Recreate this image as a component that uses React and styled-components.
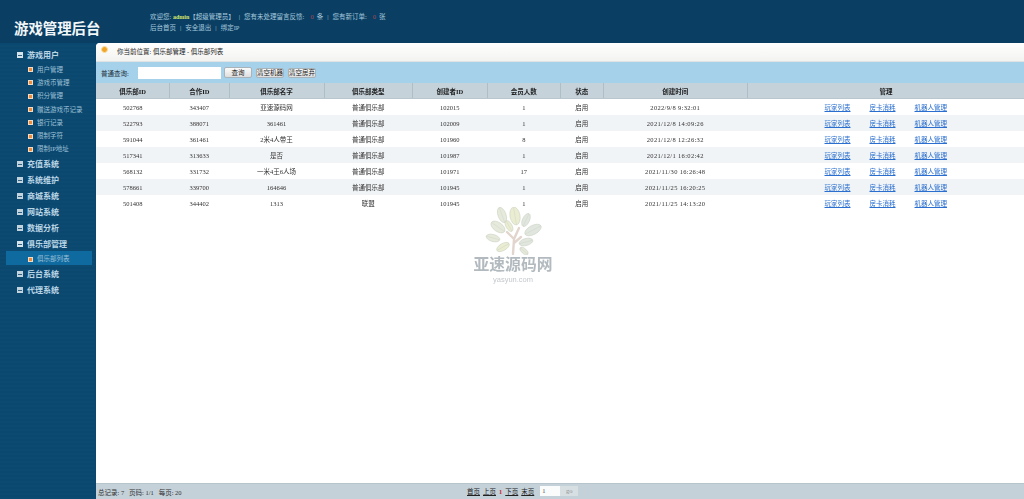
import React from 'react';
import styled, { createGlobalStyle } from 'styled-components';

const CJK = '"Liberation Serif", "Noto Sans CJK SC", serif';

const Global = createGlobalStyle`
    html, body {
        margin: 0;
        height: 499px;
        overflow: hidden;
        background: #0b466d;
        font-family: ${CJK};
        font-size: 6.5px;
    }
`;

const menu = [
    { name: '游戏用户', open: true, items: ['用户管理', '游戏币管理', '积分管理', '赠送游戏币记录', '银行记录', '限制字符', '限制IP地址'] },
    { name: '充值系统' },
    { name: '系统维护' },
    { name: '商城系统' },
    { name: '网站系统' },
    { name: '数据分析' },
    { name: '俱乐部管理', open: true, items: ['俱乐部列表'], active: '俱乐部列表' },
    { name: '后台系统' },
    { name: '代理系统' },
];

const columns = [
    { title: '俱乐部ID', width: 73.5 },
    { title: '合作ID', width: 59.5 },
    { title: '俱乐部名字', width: 95 },
    { title: '俱乐部类型', width: 88.5 },
    { title: '创建者ID', width: 74.5 },
    { title: '会员人数', width: 73.5 },
    { title: '状态', width: 42.5 },
    { title: '创建时间', width: 144.5 },
    { title: '管理', width: 276.5 },
];

const rows = [
    ['502768', '343407', '亚速源码网', '普通俱乐部', '102015', '1', '启用', '2022/9/8 9:32:01'],
    ['522793', '388071', '361461', '普通俱乐部', '102009', '1', '启用', '2021/12/8 14:09:26'],
    ['591044', '361461', '2米4人带王', '普通俱乐部', '101960', '8', '启用', '2021/12/8 12:26:32'],
    ['517341', '313633', '是否', '普通俱乐部', '101987', '1', '启用', '2021/12/1 16:02:42'],
    ['568132', '331732', '一米4王6人场', '普通俱乐部', '101971', '17', '启用', '2021/11/30 16:26:48'],
    ['578661', '339700', '164646', '普通俱乐部', '101945', '1', '启用', '2021/11/25 16:20:25'],
    ['501408', '344402', '1313', '联盟', '101945', '1', '启用', '2021/11/25 14:13:20'],
];

const leaves = [
    [49, 14, 4, 8, -20], [62, 15, 5, 9, -10], [73, 19, 3.5, 7, 25], [45, 26, 4.5, 8, -55],
    [56, 25, 3, 6, -30], [80, 29, 4.5, 9, 62], [40, 37, 3.5, 7, -75], [50, 46, 3.5, 7, 60],
    [73, 41, 3.5, 7, 75], [71, 50, 2.5, 5, -50],
];

const Tree = () => (
    <svg width="60" height="48" viewBox="30 6 60 48">
        <path d="M60 53 L61 38 L66 27 M61 38 L54 31 M61 42 L68 36" stroke="#e2d5cd" strokeWidth="2.4" fill="none" strokeLinecap="round" />
        {leaves.map(([x, y, rx, ry, r], i) => (
            <g key={i} transform={`rotate(${r} ${x} ${y})`}>
                <ellipse
                    cx={x}
                    cy={y}
                    rx={rx}
                    ry={ry}
                    fill={i % 3 === 0 ? '#e6eadc' : i % 3 === 1 ? '#ebedd3' : '#e1e7df'}
                    stroke="#c6cebc"
                    strokeWidth="0.5"
                />
                <path d={`M${x} ${y - ry} V${y + ry}`} stroke="#ccd2c0" strokeWidth="0.4" />
            </g>
        ))}
    </svg>
);

const App = () => (
    <>
        <Global />
        <Page>
            <Header>
                <Logo>游戏管理后台</Logo>
                <TopInfo>
                    <TopLine>
                        欢迎您: <Admin>admin</Admin>【超级管理员】
                        <Sep>|</Sep>
                        您有未处理留言反馈:
                        <Count>0</Count>条
                        <Sep>|</Sep>
                        您有新订单:
                        <Count>0</Count>张
                    </TopLine>
                    <TopLine>
                        后台首页<Sep>|</Sep>安全退出<Sep>|</Sep>绑定IP
                    </TopLine>
                </TopInfo>
            </Header>

            <Body>
                <Sidebar>
                    {menu.map((group) => (
                        <div key={group.name}>
                            <MenuHead>
                                <Toggle $open={group.open} />
                                {group.name}
                            </MenuHead>
                            {group.items && group.items.map((item) => (
                                <MenuItem key={item} $active={item === group.active}>
                                    <Bullet />
                                    {item}
                                </MenuItem>
                            ))}
                        </div>
                    ))}
                </Sidebar>

                <Main>
                    <Crumb>
                        <CrumbIcon />
                        你当前位置: 俱乐部管理 - 俱乐部列表
                    </Crumb>

                    <Toolbar>
                        <SearchLabel>普通查询:</SearchLabel>
                        <SearchInput />
                        <ToolButton $wide>查询</ToolButton>
                        <ToolButton>清空机器</ToolButton>
                        <ToolButton>清空房弃</ToolButton>
                    </Toolbar>

                    <TableArea>
                        <Table>
                            <colgroup>
                                {columns.map((c) => <col key={c.title} width={c.width} />)}
                            </colgroup>
                            <thead>
                                <tr>
                                    {columns.map((c) => <Th key={c.title}>{c.title}</Th>)}
                                </tr>
                            </thead>
                            <tbody>
                                {rows.map((row) => (
                                    <Tr key={row[0]}>
                                        {row.map((cell, i) => <Td key={i} $date={i === 7}>{cell}</Td>)}
                                        <Td>
                                            <Links>
                                                <a>玩家列表</a>
                                                <a>房卡消耗</a>
                                                <a>机器人管理</a>
                                            </Links>
                                        </Td>
                                    </Tr>
                                ))}
                            </tbody>
                        </Table>
                        <Watermark>
                            <Tree />
                            <MarkName>亚速源码网</MarkName>
                            <MarkUrl>yasyun.com</MarkUrl>
                        </Watermark>
                    </TableArea>

                    <Footer>
                        <span>总记录: 7 &nbsp; 页码: 1/1 &nbsp; 每页: 20</span>
                        <Pager>
                            <a>首页</a>
                            <a>上页</a>
                            <PageNo>1</PageNo>
                            <a>下页</a>
                            <a>末页</a>
                            <PageBox>
                                <PageInput>1</PageInput>
                                <PageGo>go</PageGo>
                            </PageBox>
                        </Pager>
                    </Footer>
                </Main>
            </Body>
        </Page>
    </>
);

export default App;

const Page = styled.div`
    display: flex;
    flex-direction: column;
    width: 1024px;
    height: 499px;
    filter: blur(0.3px);
`;

const Header = styled.header`
    display: flex;
    flex: 0 0 43px;
    background: #0a3f63;
    color: #a6c8dd;
`;
const Logo = styled.h1`
    width: 150px;
    margin: 0;
    padding: 19px 0 0 14px;
    box-sizing: border-box;
    color: #f2f7fa;
    font-size: 14.4px;
    line-height: 18px;
    font-weight: bold;
    font-family: "Noto Sans CJK SC", sans-serif;
`;
const TopInfo = styled.div`
    padding-top: 11px;
`;
const TopLine = styled.div`
    height: 11px;
    line-height: 11px;
    white-space: nowrap;
`;
const Sep = styled.span`
    margin: 0 4px;
`;
const Admin = styled.span`
    color: #d8e86c;
    font-size: 6px;
    font-weight: bold;
`;
const Count = styled.span`
    margin: 0 3px 0 6px;
    color: #a8485a;
`;

const Body = styled.div`
    display: flex;
    flex: 1;
    min-height: 0;
`;

const Sidebar = styled.nav`
    width: 95px;
    padding-top: 3px;
    box-sizing: border-box;
    background: repeating-linear-gradient(to bottom, #0b4870 0, #0b4870 2px, #0c4a72 2px, #0c4a72 4px);
`;
const MenuHead = styled.div`
    display: flex;
    align-items: center;
    gap: 4px;
    height: 16px;
    padding-left: 17px;
    color: #bcd6e6;
    font-size: 8px;
    font-weight: bold;
    font-family: "Noto Sans CJK SC", sans-serif;
`;
const Toggle = styled.i`
    position: relative;
    width: 6px;
    height: 6px;
    margin-top: 2px;
    background: ${(p) => (p.$open ? '#d7e3ea' : '#c3d4de')};

    &::after {
        content: '';
        position: absolute;
        left: 1px;
        right: 1px;
        top: 2.5px;
        height: 1px;
        background: #33607f;
    }
`;
const MenuItem = styled.div`
    display: flex;
    align-items: center;
    gap: 4px;
    height: ${(p) => (p.$active ? 14 : 13.3)}px;
    margin-left: 6px;
    margin-right: 3px;
    padding-left: 22px;
    color: #9dc0d6;
    background: ${(p) => (p.$active ? '#0f6aa0' : 'transparent')};
`;
const Bullet = styled.i`
    width: 3px;
    height: 3px;
    margin-top: 2px;
    border: 0.5px solid #f3dcc4;
    background: #ee8a3c;
`;

const Main = styled.main`
    display: flex;
    flex-direction: column;
    flex: 1;
    min-width: 0;
    margin-left: 1px;
    border-top-left-radius: 4px;
    overflow: hidden;
    background: #fff;
    color: #222;
`;

const Crumb = styled.div`
    display: flex;
    align-items: center;
    gap: 9px;
    flex: 0 0 19px;
    padding: 0 0 2px 5px;
    box-sizing: border-box;
    background: linear-gradient(to bottom, #fff, #f3f3f1);
    border-bottom: 1px solid #dfe3e4;
`;
const CrumbIcon = styled.i`
    width: 5px;
    height: 5px;
    margin-top: -3px;
    border-radius: 50%;
    border: 1px solid #f7dfa4;
    background: #f0a428;
`;

const Toolbar = styled.div`
    display: flex;
    align-items: center;
    gap: 4px;
    flex: 0 0 21px;
    padding-left: 5px;
    box-sizing: border-box;
    background: #a6d1ea;
    color: #22303a;
`;
const SearchLabel = styled.span`
    width: 33px;
`;
const SearchInput = styled.input`
    width: 83px;
    height: 12px;
    padding: 0;
    margin-right: -1px;
    box-sizing: border-box;
    border: 0;
    background: #fff;
`;
const ToolButton = styled.button`
    width: 28px;
    height: ${(p) => (p.$wide ? 11 : 10)}px;
    padding: 0;
    box-sizing: border-box;
    border: 1px solid #a9b4ba;
    border-radius: 2px;
    background: linear-gradient(to bottom, #fbfbfb, #dedede);
    color: #222;
    font: inherit;
    line-height: 8px;
`;

const TableArea = styled.div`
    position: relative;
    flex: 1;
    min-height: 0;
`;
const Table = styled.table`
    width: 928px;
    table-layout: fixed;
    border-collapse: collapse;
`;
const Th = styled.th`
    height: 15px;
    padding: 0;
    background: #c5d2da;
    border-right: 1px solid #aebdc6;
    border-bottom: 1px solid #b8c6ce;
    color: #1c1c1c;
    font-weight: bold;
    font-size: 6.5px;

    &:last-child {
        border-right: 0;
    }
`;
const Tr = styled.tr`
    &:nth-child(even) {
        background: #f1f4f6;
    }
`;
const Td = styled.td`
    height: 16px;
    padding: 0;
    text-align: center;
    color: #333;
    white-space: nowrap;
    letter-spacing: ${(p) => (p.$date ? '0.33px' : '0')};
`;
const Links = styled.div`
    display: flex;
    justify-content: center;
    gap: 19px;

    a {
        color: #2a6fd0;
        text-decoration: underline;
    }
`;

const Watermark = styled.div`
    position: absolute;
    left: 377px;
    top: 124px;
    width: 80px;
    display: flex;
    flex-direction: column;
    align-items: center;
    pointer-events: none;
`;
const MarkName = styled.div`
    margin-top: 1px;
    color: #b2babf;
    font-size: 15.8px;
    line-height: 17px;
    font-weight: bold;
    font-family: "Liberation Sans", "Noto Sans CJK SC", sans-serif;
    white-space: nowrap;
`;
const MarkUrl = styled.div`
    margin-top: 2px;
    color: #c4c9cd;
    font-size: 7.5px;
    line-height: 9px;
    font-family: "Liberation Sans", sans-serif;
`;

const Footer = styled.footer`
    position: relative;
    display: flex;
    align-items: center;
    flex: 0 0 16px;
    padding-left: 2px;
    box-sizing: border-box;
    background: #c4d1d9;
    border-top: 1px solid #b6c4cc;
    color: #333;
`;
const Pager = styled.div`
    position: absolute;
    left: 371px;
    top: 2px;
    display: flex;
    align-items: center;
    gap: 3px;

    a {
        color: #222;
        text-decoration: underline;
    }
`;
const PageNo = styled.span`
    color: #d01c2c;
    font-weight: bold;
`;
const PageBox = styled.div`
    display: flex;
    margin-left: 3px;
`;
const PageInput = styled.div`
    width: 20px;
    height: 10px;
    padding-left: 2px;
    box-sizing: border-box;
    line-height: 10px;
    background: #fafbfb;
    color: #555;
`;
const PageGo = styled.div`
    width: 18px;
    height: 10px;
    line-height: 10px;
    text-align: center;
    background: #d8dfe2;
    color: #8a9398;
`;
